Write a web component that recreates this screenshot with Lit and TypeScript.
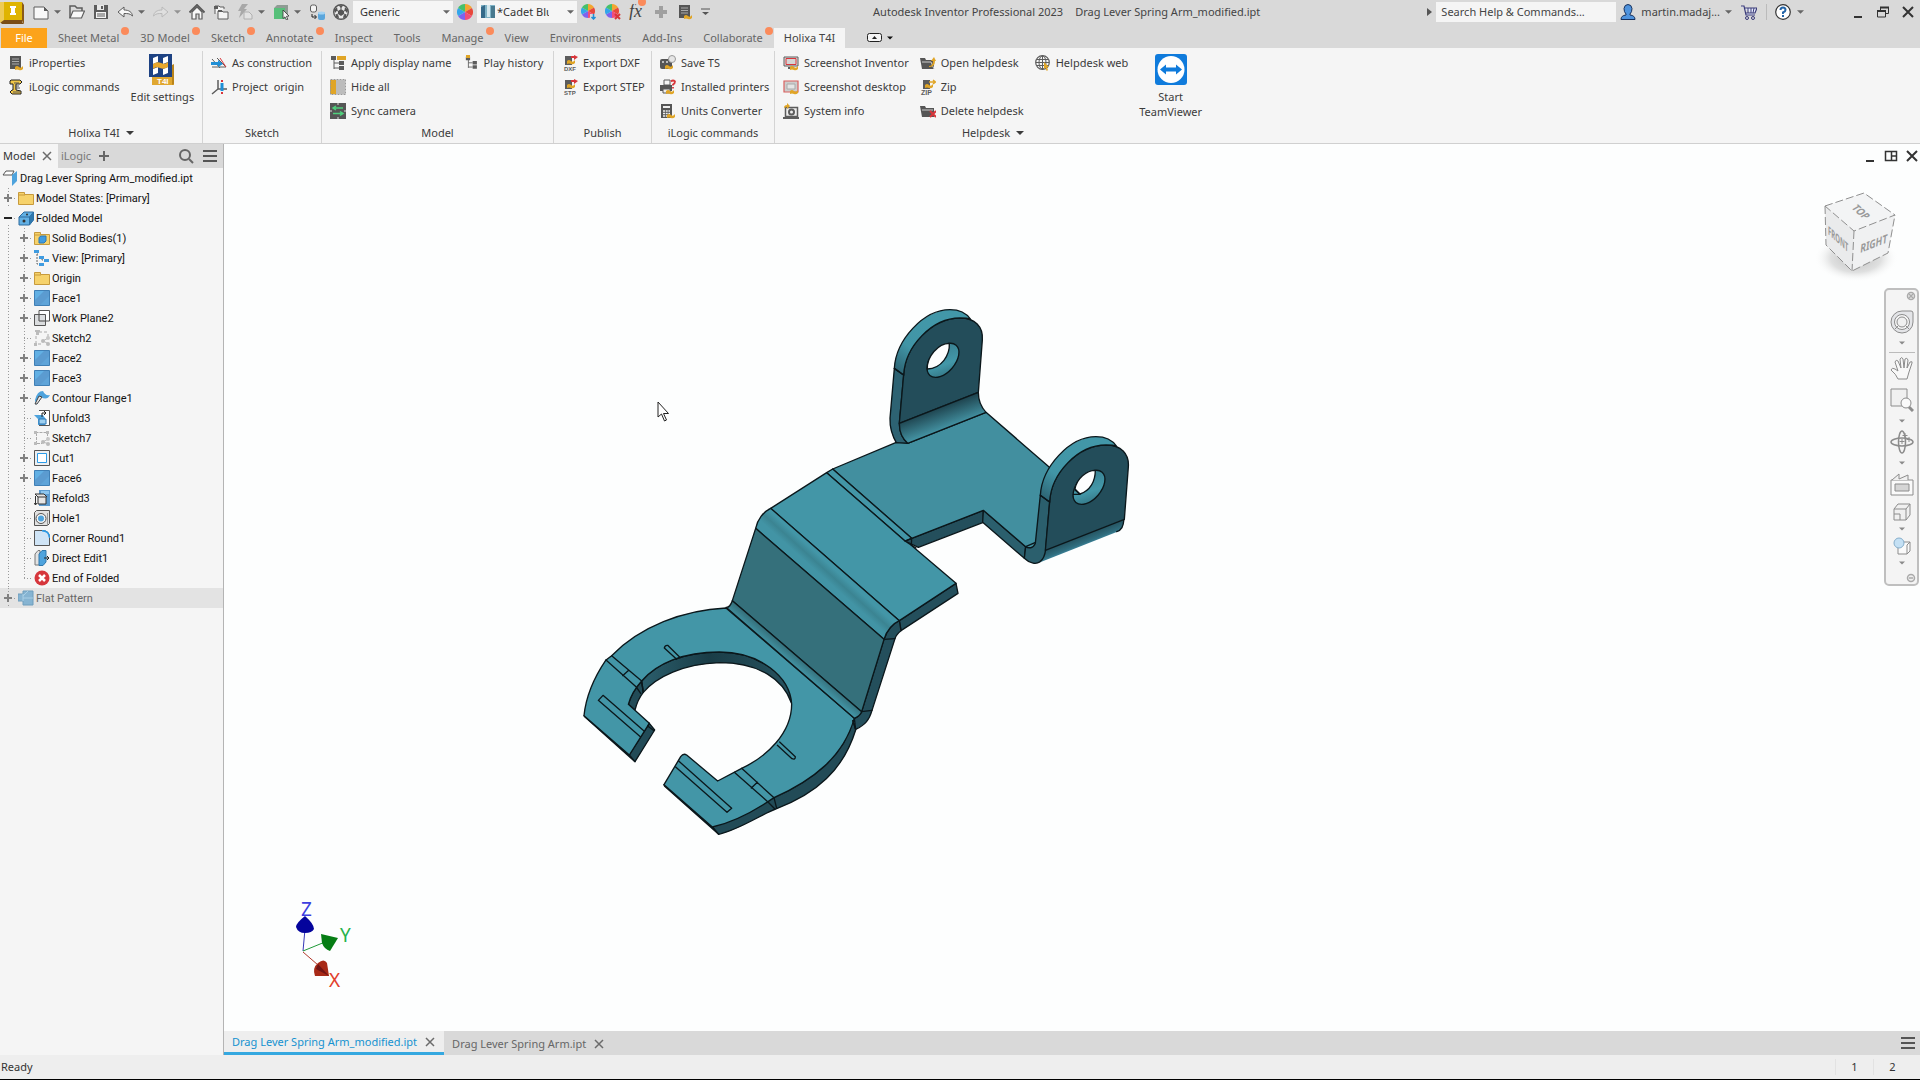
import { LitElement, html, css, svg, nothing } from "lit";
import type { TemplateResult, SVGTemplateResult } from "lit";
import { customElement, property } from "lit/decorators.js";
import { classMap } from "lit/directives/class-map.js";

const G = "#5c5c5c";
const Y = "#e0a526";
const R = "#d8353a";
const B = "#1f8fd6";
const wave = (x: number, y: number) =>
  svg`<path d="M${x} ${y + 4}v-3q2-2 4 0t4-1v3q-2 2-4 1t-4 0z" fill=${Y}/>`;
const wheelShape = (cx: number, cy: number, r: number) => {
  const colors = ["#f3a530", "#e8483b", "#f24d78", "#7d63ee", "#33a6ea", "#46c06a"];
  return colors.map((c, i) => {
    const a = ((i * 60 - 90) * Math.PI) / 180;
    const b = ((i * 60 - 30) * Math.PI) / 180;
    return svg`<path fill=${c} d="M${cx} ${cy}L${cx + r * Math.cos(a)} ${cy + r * Math.sin(a)}A${r} ${r} 0 0 1 ${cx + r * Math.cos(b)} ${cy + r * Math.sin(b)}Z"/>`;
  });
};
const face = svg`<path d="M.5.5h15v15H.5z" fill="#5b9bd0" stroke="#3f7fb5"/><path d="M1 1h9L1 10z" fill="#62b0e4"/><path d="M15 6v9H6z" fill="#62b0e4" opacity=".45"/>`;
const folder = svg`<path d="M.5 14.500V2.500h6v2h9v10z" fill="#f6d26b" stroke="#c79a3c"/><path d="M1 5h6" stroke="#c79a3c"/>`;
const tree = svg`<path d="M4 4v10M4 8h5M4 13h5" stroke=${G} fill="none"/><path d="M1 1h5v4H1zM9 6h5v4H9zM9 11h5v4H9z" fill=${G}/>`;
const exporter = (t: string) => svg`<path d="M3 1h7v9H3z" fill=${G}/><path d="M9 2h5" stroke=${R} stroke-width="2"/><path d="M12 0l4 2-4 3z" fill=${R}/>${wave(5, 5)}<text x="2" y="16" font-size="6" font-weight="700" fill=${G} font-family="Liberation Sans, sans-serif">${t}</text>`;

const ICONS: Record<string, SVGTemplateResult> = {
  newDoc: svg`<path d="M1 3h10l4 4v8H1z" fill="#f8f8f8" stroke=${G}/><path d="M11 3v4h4z" fill=${G}/>`,
  open: svg`<path d="M1 14V2h5l2 2h5v3" fill="none" stroke=${G} stroke-width="1.500"/><path d="M1 14l3-7h11.500l-3 7z" fill="#f8f8f8" stroke=${G} stroke-width="1.200"/>`,
  save: svg`<path d="M1 1h14v14H1z" fill=${G}/><path d="M4 1h7v5H4z" fill="#e8e8e8"/><path d="M8 2h2v3H8z" fill=${G}/><path d="M3 8h10v6H3z" fill="#f4f4f4"/><path d="M4 10h8M4 12h8" stroke=${G}/>`,
  undo: svg`<path d="M1 8l6-5v3c5 0 8 2 8.500 6C13 9.500 11 9.500 7 9.500V13z" fill="#f8f8f8" stroke=${G}/>`,
  redo: svg`<path d="M15 8L9 3v3C4 6 1 8 .5 12 3 9.500 5 9.500 9 9.500V13z" fill="#e4e4e4" stroke="#a5a5a5"/>`,
  home: svg`<path d="M3 8v7h4v-5h3v5h3V8L8 3z" fill="#f8f8f8" stroke=${G} stroke-width="1.200"/><path d="M.5 8.500L8 1l7.500 7.500" fill="none" stroke=${G} stroke-width="2"/>`,
  copies: svg`<path d="M2 10V2h4l1 1h4v2M5 7h4l1 1h5v7H5z" fill="#f4f4f4" stroke=${G}/><path d="M1 2h4v3H1zM5 6h4v2H5z" fill=${G}/>`,
  bolt: svg`<path d="M5 0h6L7 5h3L2 14l2-7H1z" fill="#a8a8a8"/><path d="M7 8h5l3 3v4H7z" fill="#e2e2e2" stroke="#b0b0b0"/>`,
  sheet: svg`<path d="M1 4h11v11H1z" fill="#57c07a"/><path d="M1 4l3-3h11v10l-3 3V4z" fill="#8f9c94"/><path d="M10 6l6 6-2.500.3 1.300 3-1.500.6-1.300-3L10 14.500z" fill="#f4f4f4" stroke="#333" stroke-width=".8"/>`,
  links: svg`<rect x="1.500" y="1" width="6" height="7" rx="2" fill="#f4f4f4" stroke=${G}/><path d="M3 10v3h4M5.500 11l2 2-2 2" fill="none" stroke="#222"/><rect x="9" y="8" width="7" height="8" rx="2" fill="#5aa6dc"/><ellipse cx="12.500" cy="9" rx="3.500" ry="1.500" fill="#a5d3f2"/>`,
  ball: svg`<circle cx="8" cy="8" r="7.300" fill="#e8e8e8" stroke="#555" stroke-width="1.400"/><path d="M8 5l3 2v3l-3 2-3-2V7z" fill="#555"/><path d="M5.500 1.200h5L8 4zM1 6l3-3 .500 3L2 9zM15 6l-3-3-.5 3L14 9zM3 13l-.5-3 3 1.500.5 3zM13 13l.5-3-3 1.500-.5 3z" fill="#555"/><path d="M8 5V3M5 7L3 6M11 7l2-1M5 10l-2 1M11 10l2 1" stroke="#555"/>`,
  colors: svg`${wheelShape(8, 8, 8)}`,
  colorDrop: svg`${wheelShape(7, 7, 7)}<path d="M9 10h7v6H9z" fill="#d9d9d9"/><path d="M12.500 10v4M10.500 13l2 2 2-2" stroke=${B} stroke-width="1.500" fill="none"/>`,
  colorClear: svg`${wheelShape(7, 7, 7)}<path d="M10 10l5 5M15 10l-5 5" stroke=${R} stroke-width="2"/>`,
  fx: svg`<text x="0" y="13" font-size="18" font-style="italic" fill="#444" font-family="Liberation Serif, serif">fx</text>`,
  plus: svg`<path d="M8 2v12M2 8h12" stroke="#a0a0a0" stroke-width="4"/>`,
  docWave: svg`<path d="M2 1h11v13H2z" fill="#555"/><path d="M4 4h7M4 6.500h7M4 9h7" stroke="#aaa"/>${wave(7, 11)}`,
  scroll: svg`<path d="M3 1h9l2 2-2 2H8v6l5 1v3H4l-2-2 2-2h1V5H2V2z" fill="#f3c848" stroke="#222"/><path d="M6 4h5M7 7h4M7 9h5M5 13h7" stroke="#555"/>`,
  asCon: svg`<path d="M1 4l8 9M1 12h14M6 3l9 9" stroke=${G} fill="none"/><path d="M9 3l6 9" stroke=${R} fill="none"/><path d="M0 7h7v-2l5 4-5 3v-2H0z" fill=${B}/>`,
  origin: svg`<path d="M7 1v9L1 15M7 10h9" stroke=${G} stroke-width="1.500" fill="none"/><path d="M11 4v8" stroke=${B} stroke-width="3"/><path d="M10 1h2v2h-2zM10 13h2v2h-2z" fill=${R}/>`,
  nameTree: svg`${tree}<path d="M7 1h9v4H7z" fill=${Y}/>`,
  history: svg`<g transform="translate(3 1) scale(.85)">${tree}</g><path d="M4 0h4v3H4z" fill=${Y}/>`,
  hideAll: svg`<path d="M0 1h6v14H0z" fill=${Y}/><path d="M6 1h9v14H6z" fill="#bcbcbc"/><path d="M.5.5h15v15H.5z" fill="none" stroke="#999" stroke-dasharray="2 1"/>`,
  sync: svg`<path d="M0 0h16v16H0z" fill="#555"/><path d="M3 5h10M6 3L3 5l3 2M3 10.500h10M10 8.500l3 2-3 2" stroke="#4fd07c" stroke-width="1.500" fill="none"/><path d="M0 8h2M14 8h2M8 0v2M8 14v2" stroke="#ddd"/>`,
  dxf: exporter("DXF"),
  stp: exporter("STP"),
  saveTs: svg`<rect x="0" y="4" width="12" height="10" rx="2" fill="#555"/><circle cx="12" cy="4" r="3.500" fill="#e5e5e5" stroke="#999"/><circle cx="3" cy="7" r="1" fill="#ddd"/><circle cx="7" cy="7" r="1" fill="#ddd"/>${wave(5, 10)}`,
  printer: svg`<path d="M4 1h6v5H4z" fill="#f5f5f5" stroke=${G}/><path d="M0 6h12v6H0z" fill="#555"/><path d="M3 10h7v4H3z" fill="#eee" stroke=${G}/><path d="M11 2.500q2-2 4 0 0 2-2 3v1M13 8v1.500" stroke=${R} stroke-width="1.800" fill="none"/>${wave(6, 11)}`,
  calc: svg`<path d="M1 1h11v14H1z" fill="#555"/><path d="M3 3h7v2H3z" fill="#eee"/><path d="M3 8h7M3 10.500h7M3 13h5" stroke="#eee" stroke-width="1.500" stroke-dasharray="2 .7"/>${wave(7, 11)}`,
  shotInv: svg`<path d="M1 2h14v9H1z" fill="#ddd" stroke=${G}/><path d="M3 3.500h10v6H3z" fill="#d5d5d5" stroke=${R}/><path d="M5 13h6" stroke=${G} stroke-width="2"/>${wave(7, 11)}`,
  shotDesk: svg`<path d="M1 2h14v11H1z" fill="#ccc" stroke="#d9605f" stroke-width="1.200"/><path d="M4 5h8v5H4z" fill="#e5e5e5" stroke="#aaa"/>${wave(7, 11)}`,
  sysInfo: svg`<path d="M2.500 4.500h12v9h-12z" fill="#eee" stroke=${G} stroke-width="1.500"/><path d="M0 15h16" stroke=${G} stroke-width="2"/><circle cx="8.500" cy="9" r="2.500" fill="none" stroke=${G} stroke-width="2"/><path d="M1 5q0-3 3-3V0l3 3-3 3V4z" fill=${Y}/>`,
  openHelp: svg`<path d="M0 3h5l1 2h8v9H2z" fill="#555"/><path d="M2 7h9l3 7" stroke="#ccc" fill="none"/><path d="M9 11q4 0 4-5h-2l3-4 2 4h-1q0 6-6 6z" fill=${Y}/>`,
  zip: svg`<path d="M3 1h7v9H3z" fill=${G}/><path d="M9 3h6M13 1l2.500 2L13 5" stroke=${Y} stroke-width="1.500" fill="none"/>${wave(5, 5)}<text x="1" y="16" font-size="7" font-weight="700" fill=${G} font-family="Liberation Sans, sans-serif">ZIP</text>`,
  delHelp: svg`<path d="M0 3h5l1 2h8v9H2z" fill="#555"/><path d="M2 7h11" stroke="#ccc" fill="none"/><path d="M10 8l6 6M16 8l-6 6" stroke=${R} stroke-width="2"/>`,
  globe: svg`<circle cx="7.500" cy="7.500" r="6.800" fill="#f5f5f5" stroke=${G} stroke-width="1.200"/><path d="M7.500 1v13M1 7.500h13M2 4.500h11M2 10.500h11" stroke=${G} fill="none"/><ellipse cx="7.500" cy="7.500" rx="3.500" ry="6.500" fill="none" stroke=${G}/><path d="M9 7l5 5-2 .3 1 3-1.500.5-1-3L9 14z" fill=${Y}/>`,
  user: svg`<path d="M1 15.500q0-4 5-4.500v-1Q4 8 4 4.500 4.500.5 8 .5t4 4Q12 8 10 10v1q5 .5 5 4.500z" fill="#4f93dd" stroke="#16305c"/>`,
  cart: svg`<path d="M0 2h3l2 9h9M4 4h12l-2 5H5" fill="#e6ecff" stroke="#3a3a78" stroke-width="1.200"/><path d="M7 4v5M10 4v5M13 4l-1 5" stroke="#3a3a78"/><circle cx="6" cy="14" r="1.500" fill="none" stroke="#3a3a78"/><circle cx="12" cy="14" r="1.500" fill="none" stroke="#3a3a78"/>`,
  help: svg`<circle cx="8" cy="8" r="7.300" fill="#fff" stroke="#333" stroke-width="1.200"/><path d="M5.500 6Q5.500 3.500 8 3.500T10.500 6Q10.500 7.500 8 8.500V10M8 11v2" stroke="#2465a8" stroke-width="2" fill="none"/>`,
  minimize: svg`<path d="M4 13h8" stroke="#333" stroke-width="2"/>`,
  restore: svg`<path d="M2.500 7h8v6h-8zM5.500 7V3.500h8v6h-3" fill="none" stroke="#333"/><path d="M2 7h9M5 3.500h9" stroke="#333" stroke-width="2"/>`,
  close: svg`<path d="M3 3l10 10M13 3L3 13" stroke="#333" stroke-width="2"/>`,
  tile: svg`<path d="M2.500 3.500h11v9h-11zM8.500 3.500v9M8.500 8h5" fill="none" stroke="#333" stroke-width="1.500"/>`,
  smallX: svg`<path d="M4 4l8 8M12 4l-8 8" stroke="#6b6b6b" stroke-width="1.500"/>`,
  add: svg`<path d="M8 3v10M3 8h10" stroke="#666" stroke-width="2"/>`,
  search: svg`<circle cx="7" cy="7" r="5" fill="none" stroke="#666" stroke-width="2"/><path d="M11 11l4 4" stroke="#666" stroke-width="2"/>`,
  menu: svg`<path d="M1 3h14M1 8h14M1 13h14" stroke="#555" stroke-width="2"/>`,
  part: svg`<path d="M1 5l3-4h8l-2 4z" fill="#fff" stroke="#555"/><path d="M10 5l5-4v10l-5 5z" fill="#4ea3dd"/>`,
  folder,
  folded: svg`<path d="M1 7l5-5h9.500v8l-4 5H1z" fill="#62b0e4" stroke="#2c6a9e"/><path d="M1 7h10.500l4-5M11.500 7v8" stroke="#2c6a9e" fill="none"/><path d="M11.500 7l4-5v8l-4 5z" fill="#2f78ad"/><circle cx="6" cy="11" r="1.500" fill="#333"/><circle cx="9" cy="4.500" r="1" fill="#333"/>`,
  bodies: svg`${folder}<path d="M5 7.500L7 6h5v5l-2 2H5z" fill="#3f9be0" stroke="#2c76b4"/>`,
  view: svg`<path d="M3 4v10h2M3 4h1M8 9v1h3" fill="none" stroke="#666" stroke-dasharray="2 1"/><path d="M0 0h5v3H0zM5 6h5v3H5zM10 9h5v3h-5zM5 13h5v3H5z" fill="#3f9be0"/>`,
  face,
  plane: svg`<path d="M5 .5h10.500V11H5z" fill="#fff" stroke="#555"/><path d="M.5 4.500h11v11H.5z" fill="#d5d7da" fill-opacity=".8" stroke="#555"/><path d="M5 4.500V11h6.500" stroke="#555" fill="none"/>`,
  sketchA: svg`<path d="M5 2h9M2 6v8h6M14 4v3" stroke="#aaa" fill="none" stroke-dasharray="3 2"/><path d="M1 0h5v2H1zM2 2h3v3H2zM0 13h3v3H0z" fill="#bbb"/><path d="M14 8l-5 3 6 3" stroke="#bbb" fill="none"/><circle cx="14" cy="8" r="2" fill="#c8c8c8"/><circle cx="9" cy="11" r="2" fill="#bbb"/><circle cx="14" cy="14" r="2" fill="#bbb"/>`,
  sketchB: svg`<path d="M1.500 2.500h12M2.500 3v11M13.500 3v5M3 13.500h5" stroke="#aaa" fill="none" stroke-dasharray="3 1"/><path d="M0 1h3v3H0zM12 1h3v3h-3zM0 12h3v3H0z" fill="#bbb"/><path d="M14 9l-5 3 6 2" stroke="#bbb" fill="none"/><circle cx="14" cy="9" r="2" fill="#c8c8c8"/><circle cx="9" cy="12" r="2" fill="#bbb"/><circle cx="14" cy="14" r="2" fill="#bbb"/>`,
  flange: svg`<path d="M1 10Q3 1 9 1q2 5 7 4-3 6-9 2l-5 8z" fill="#4ea3dd"/><path d="M1 14L5 6l3 1-5 7z" fill="#e8e8e8" stroke="#444"/>`,
  unfold: svg`<path d="M5 .5h10.500v15H5" fill="#fff" stroke="#555"/><path d="M0 5h9l2 3v7H4V9z" fill="#4ea3dd"/><path d="M5 9h7v5H5z" fill="#9fd0f0" stroke="#2c76b4"/><path d="M8 7V3h3M10 1l2 2-2 2" stroke="#222" fill="none"/>`,
  cut: svg`<path d="M.5.5h15v15H.5z" fill="#eceef0" stroke="#555"/><path d="M3.500 3.500h9v9h-9z" fill="#fff" stroke="#2b9be8"/>`,
  refold: svg`<path d="M5 0h11v16H5z" fill="#5b9bd0"/><path d="M7 1h8v3H7z" fill="#8ec6ee"/><path d="M4 7h8v7H4zM4 7L1 4h9l3 3" fill="#e6e6e6" stroke="#333"/><path d="M1.500 6v9M0 13l1.500 2L3 13" stroke="#333" fill="none"/>`,
  hole: svg`<path d="M.5 2.500l2-2h13v13l-2 2H.5z" fill="#e2e2e2" stroke="#555"/><circle cx="7" cy="8.500" r="5" fill="#f4f4f4" stroke="#555"/><circle cx="7" cy="8.500" r="3" fill="#4ea3dd"/><path d="M13.500 15.500V3" stroke="#999"/>`,
  round: svg`<path d="M.5.500h8q7 0 7 7v8H.5z" fill="#cfe4f6" stroke="#555"/><path d="M8 .8q7 0 7.500 7" fill="none" stroke="#2b9be8" stroke-width="1.500"/>`,
  direct: svg`<path d="M1 15V4l3-3.500h2V15z" fill="#e2e2e2" stroke="#777"/><path d="M5 4l3-3.500h4V12l-3 3.500H5z" fill="#4ea3dd" stroke="#2f78ad"/><path d="M10 8h5M13 6l2 2-2 2" stroke="#222" fill="none"/>`,
  end: svg`<circle cx="8" cy="8" r="7.500" fill="#d6363c"/><path d="M5 5l6 6M11 5l-6 6" stroke="#fff" stroke-width="2.500"/>`,
  flat: svg`<path d="M0 4h5V1h10v14H5v-4H0z" fill="#86b4d2" stroke="#6f9ebd"/><path d="M5 4v7M5 8h10M10 1L5 6" stroke="#a9cfe6" fill="none"/>`,
};

const icon = (name: string, size = "16") =>
  html`<svg class="ic" width=${size} height=${size} viewBox="0 0 16 16" aria-hidden="true">${ICONS[name]}</svg>`;
const caret = html`<svg class="caret" width="8" height="8" viewBox="0 0 8 8" aria-hidden="true"><path d="M0 2h8L4 6z" fill="currentColor"/></svg>`;

const reset = css`
  * { box-sizing: border-box; }
  button, input, select {
    font: inherit; color: inherit; background: none; border: 0; padding: 0; margin: 0; border-radius: 0;
  }
  svg { display: block; flex: none; }
  ul { list-style: none; margin: 0; padding: 0; }
`;

interface Tool { icon: string; label: string; }
interface Panel { title: string; more?: boolean; columns: Tool[][]; big?: "settings" | "teamviewer"; }

@customElement("title-bar")
class TitleBar extends LitElement {
  static styles = [reset, css`
    :host { display: flex; height: 28px; padding-bottom: 5px; align-items: center; background: #d9d9d9; color: #444; }
    .logo { width: 24px; margin-right: 9px; }
    .quick { display: flex; align-items: center; gap: 8px; }
    .split { display: flex; align-items: center; gap: 5px; }
    .caret { width: 7px; color: #666; }
    .faded { opacity: .6; }
    .pick { position: relative; width: 100px; margin: 0 -4px; }
    .pick select { appearance: none; width: 100%; height: 22px; padding: 0 18px 0 7px; background: #f5f5f5; color: #333; overflow: hidden; }
    .pick.swatch select { padding: 0 28px 0 20px; text-overflow: clip; }
    .pick .caret { position: absolute; right: 3px; top: 7px; }
    .pick .chip { position: absolute; left: 4px; top: 3px; }
    .badge { position: relative; }
    .badge::after { content: ""; position: absolute; right: -1px; top: -6px; width: 8px; height: 8px; border-radius: 4px; background: #fb8b5b; }
    .title { flex: 1; display: flex; justify-content: center; gap: 12px; padding-right: 4px; white-space: nowrap; }
    .right { display: flex; align-items: center; }
    .right input { width: 180px; height: 20px; padding: 0 5px; margin: 0 4px; background: #f5f5f5; outline: 0; }
    .right input::placeholder { color: #444; opacity: 1; }
    .user { display: flex; align-items: center; gap: 5px; }
    .cart { margin: 0 9px; }
    .help { display: flex; align-items: center; gap: 6px; border-left: 1px solid #bbb; padding-left: 8px; }
    .win { display: flex; gap: 9px; margin: 0 4px 0 46px; }
  `];
  render() {
    const b = (n: string, label: string, cls = "") => html`<button class=${cls} aria-label=${label}>${icon(n)}</button>`;
    const s = (n: string, label: string, cls = "") => html`<button class="split ${cls}" aria-label=${label}>${icon(n)}${caret}</button>`;
    return html`
      <svg class="logo" width="24" height="24" viewBox="0 0 24 24" aria-hidden="true">
        <path d="M0 4l2-2h20v20l2 2H2l-2-2z" fill="#7a4d17"/><path d="M0 2h22v18H0z" fill="#dfb400"/><path d="M0 2h4v18l-4 3z" fill="#eecb55"/><path d="M22 2l2 3v19l-2-3z" fill="#8a5a18"/><path d="M10 6h6v2h-1v5h1v2h-6v-2h1V8h-1z" fill="#fff"/>
      </svg>
      <div class="quick">
        ${s("newDoc", "New")}${b("open", "Open")}${b("save", "Save")}${s("undo", "Undo")}${s("redo", "Redo", "faded")}
        ${b("home", "Home")}${b("copies", "Projects")}${s("bolt", "Update")}${s("sheet", "Select")}${b("links", "Link")}${b("ball", "Material browser")}
        <div class="pick"><select aria-label="Material"><option>Generic</option></select>${caret}</div>
        ${b("colors", "Appearance browser")}
        <div class="pick swatch"><select aria-label="Appearance"><option>*Cadet Blue</option></select>
          <svg class="chip" width="14" height="16" viewBox="0 0 14 16" aria-hidden="true"><path d="M0 1h14v13H0z" fill="#7fb3c6"/><path d="M0 3l4-2v13H0z" fill="#356a8a"/><path d="M6 1h3v12H6z" fill="#d5e8ee"/><path d="M10 2h4v12h-4z" fill="#47798f"/></svg>
          ${caret}</div>
        ${b("colorDrop", "Adjust appearance")}${b("colorClear", "Clear appearance")}${b("fx", "Parameters", "badge")}${b("plus", "Add")}${b("docWave", "iProperties")}
        <button aria-label="Customize"><svg width="9" height="16" viewBox="0 0 9 16"><path d="M0 5h9" stroke="#555"/><path d="M1 8h7L4.500 11z" fill="#555"/></svg></button>
      </div>
      <div class="title"><span>Autodesk Inventor Professional 2023</span><span>Drag Lever Spring Arm_modified.ipt</span></div>
      <div class="right">
        <svg width="5" height="8" viewBox="0 0 5 8" aria-hidden="true"><path d="M0 0v8l5-4z" fill="#555"/></svg>
        <input aria-label="Search" placeholder="Search Help &amp; Commands..." />
        <button class="user">${icon("user")}<span>martin.madaj...</span>${caret}</button>
        ${b("cart", "App store", "cart")}
        <button class="help" aria-label="Help">${icon("help")}${caret}</button>
        <div class="win">${b("minimize", "Minimize")}${b("restore", "Restore")}${b("close", "Close")}</div>
      </div>`;
  }
}

@customElement("ribbon-bar")
class RibbonBar extends LitElement {
  static styles = [reset, css`
    :host { display: block; background: #d9d9d9; color: #3b3b3b; }
    .tabs { display: flex; gap: 1px; height: 20px; align-items: stretch; padding-left: 1px; }
    .tab { position: relative; padding: 0 10px; color: #666; white-space: nowrap; }
    .file { width: 46px; background: #fca31b; color: #fff; }
    .on { background: #f5f5f5; color: #444; }
    .new::after { content: ""; position: absolute; right: 0; top: -1px; width: 8px; height: 8px; border-radius: 4px; background: #fb8b5b; }
    .mode { display: flex; align-items: center; gap: 4px; margin-left: 21px; color: #111; }
    .mode .caret { width: 6px; }
    .body { display: grid; grid-template-columns: 203px 119px 232px 98px 123px 436px 1fr; background: #f5f5f5; border-bottom: 1px solid #d0d0d0; padding-top: 3px; height: 96px; }
    .panel { display: flex; flex-direction: column; border-right: 1px solid #d4d4d4; padding-left: 8px; }
    .panel:last-of-type { border-right: 0; }
    .tools { display: flex; gap: 11px; height: 72px; }
    .col { display: flex; flex-direction: column; }
    .tool { display: flex; align-items: center; gap: 5px; height: 24px; white-space: pre; }
    .big { display: flex; flex-direction: column; align-items: center; gap: 3px; padding-top: 3px; line-height: 15px; }
    .name { height: 20px; line-height: 18px; display: flex; align-items: center; justify-content: center; gap: 6px; padding-right: 8px; }
  `];
  private tabs: [string, boolean][] = [["Sheet Metal", true], ["3D Model", true], ["Sketch", true], ["Annotate", true], ["Inspect", false], ["Tools", false], ["Manage", true], ["View", false], ["Environments", false], ["Add-Ins", false], ["Collaborate", true]];
  private panels: Panel[] = [
    { title: "Holixa T4I", more: true, big: "settings", columns: [[{ icon: "docWave", label: "iProperties" }, { icon: "scroll", label: "iLogic commands" }]] },
    { title: "Sketch", columns: [[{ icon: "asCon", label: "As construction" }, { icon: "origin", label: "Project  origin" }]] },
    { title: "Model", columns: [[{ icon: "nameTree", label: "Apply display name" }, { icon: "hideAll", label: "Hide all" }, { icon: "sync", label: "Sync camera" }], [{ icon: "history", label: "Play history" }]] },
    { title: "Publish", columns: [[{ icon: "dxf", label: "Export DXF" }, { icon: "stp", label: "Export STEP" }]] },
    { title: "iLogic commands", columns: [[{ icon: "saveTs", label: "Save TS" }, { icon: "printer", label: "Installed printers" }, { icon: "calc", label: "Units Converter" }]] },
    { title: "Helpdesk", more: true, big: "teamviewer", columns: [
      [{ icon: "shotInv", label: "Screenshot Inventor" }, { icon: "shotDesk", label: "Screenshot desktop" }, { icon: "sysInfo", label: "System info" }],
      [{ icon: "openHelp", label: "Open helpdesk" }, { icon: "zip", label: "Zip" }, { icon: "delHelp", label: "Delete helpdesk" }],
      [{ icon: "globe", label: "Helpdesk web" }]] },
  ];
  private big(kind?: string) {
    if (kind === "settings") return html`<button class="big"><svg width="32" height="32" viewBox="0 0 32 32" aria-hidden="true">
      <path d="M9 11h19v20H6V20z" fill="#e0a730"/><path d="M26 11l2-1v20l-2 1z" fill="#b9841b"/><path d="M3 0h23v23H3z" fill="#1d4283"/>
      <path d="M7 4l5-2v6l-5 2zM17 4l5-2v6l-5 2zM7 15l5-2v6l-5 2zM17 15l5-2v6l-5 2z" fill="#fff"/><path d="M7 10q4-3 8-1t7-1v5q-4 3-8 1t-7 1z" fill="#e9a82c"/>
      <text x="11" y="30" font-size="8" font-weight="700" fill="#fff" font-family="Liberation Sans, sans-serif">T4I</text></svg><span>Edit settings</span></button>`;
    if (kind === "teamviewer") return html`<button class="big"><svg width="32" height="32" viewBox="0 0 32 32" aria-hidden="true">
      <rect x="0" y="0" width="32" height="31" rx="3" fill="#0f7bdc"/><circle cx="16" cy="15.500" r="13.500" fill="#fff"/>
      <path d="M5 15.500l6-5v3h10v-3l6 5-6 5v-3H11v3z" fill="#0f7bdc"/></svg><span>Start<br />TeamViewer</span></button>`;
    return nothing;
  }
  render() {
    return html`
      <nav class="tabs">
        <button class="tab file">File</button>
        ${this.tabs.map(([t, n]) => html`<button class=${classMap({ tab: true, new: n })}>${t}</button>`)}
        <button class="tab on">Holixa T4I</button>
        <button class="mode" aria-label="Ribbon display"><svg width="16" height="10" viewBox="0 0 16 10"><rect x=".5" y=".5" width="14" height="8" rx="2" fill="#f5f5f5" stroke="#222"/><path d="M5 6h5L7.500 3z" fill="#222"/></svg>${caret}</button>
      </nav>
      <div class="body">
        ${this.panels.map((p) => html`<section class="panel">
          <div class="tools">
            ${p.columns.map((c) => html`<div class="col">${c.map((t) => html`<button class="tool">${icon(t.icon)}<span>${t.label}</span></button>`)}</div>`)}
            ${this.big(p.big)}
          </div>
          <div class="name">${p.title}${p.more ? caret : nothing}</div>
        </section>`)}
      </div>`;
  }
}

interface Node { icon: string; label: string; cells: string; dim?: boolean; }

@customElement("model-browser")
class ModelBrowser extends LitElement {
  static styles = [reset, css`
    :host { display: flex; flex-direction: column; background: #f5f5f5; border-right: 1px solid #b4b4b4; color: #111; }
    .tabs { display: flex; align-items: center; height: 24px; background: #d9d9d9; color: #777; padding-right: 5px; }
    .tab { display: flex; align-items: center; gap: 4px; height: 24px; padding: 0 3px; }
    .on { background: #f5f5f5; color: #333; width: 58px; }
    .add { margin-left: 2px; }
    .grow { flex: 1; }
    .menu { margin-left: 8px; }
    .tree { font: 11px/20px Roboto, "Noto Sans", sans-serif; }
    .row { display: flex; align-items: center; height: 20px; white-space: nowrap; }
    .row .ic { margin: 0 2px; }
    .row button { display: block; }
    .row span { padding-top: 2px; }
    .dim { background: #e3e3e3; color: #666; }
  `];
  private nodes: Node[] = [
    { icon: "part", label: "Drag Lever Spring Arm_modified.ipt", cells: "" },
    { icon: "folder", label: "Model States: [Primary]", cells: "+" },
    { icon: "folded", label: "Folded Model", cells: "-" },
    { icon: "bodies", label: "Solid Bodies(1)", cells: "|+" },
    { icon: "view", label: "View: [Primary]", cells: "|+" },
    { icon: "folder", label: "Origin", cells: "|+" },
    { icon: "face", label: "Face1", cells: "|+" },
    { icon: "plane", label: "Work Plane2", cells: "|+" },
    { icon: "sketchA", label: "Sketch2", cells: "|t" },
    { icon: "face", label: "Face2", cells: "|+" },
    { icon: "face", label: "Face3", cells: "|+" },
    { icon: "flange", label: "Contour Flange1", cells: "|+" },
    { icon: "unfold", label: "Unfold3", cells: "|t" },
    { icon: "sketchB", label: "Sketch7", cells: "|t" },
    { icon: "cut", label: "Cut1", cells: "|+" },
    { icon: "face", label: "Face6", cells: "|+" },
    { icon: "refold", label: "Refold3", cells: "|t" },
    { icon: "hole", label: "Hole1", cells: "|t" },
    { icon: "round", label: "Corner Round1", cells: "|t" },
    { icon: "direct", label: "Direct Edit1", cells: "|t" },
    { icon: "end", label: "End of Folded", cells: "|l" },
    { icon: "flat", label: "Flat Pattern", cells: "+", dim: true },
  ];
  private cell(k: string): TemplateResult {
    const line = (d: string) => svg`<path d=${d} stroke="#9a9a9a" stroke-dasharray="1 2" fill="none"/>`;
    const shapes: Record<string, SVGTemplateResult> = {
      "|": line("M8.500 0v20"),
      t: svg`${line("M8.500 0v20")}${line("M8 10.500h9")}`,
      l: svg`${line("M8.500 0v11")}${line("M8 10.500h9")}`,
      "+": svg`${line("M8.500 0v4M8.500 17v3")}${line("M14 10.500h3")}<path d="M4 10h8M8 6v8" stroke="#808080" stroke-width="2"/>`,
      "-": svg`${line("M8.500 17v3")}${line("M14 10.500h3")}<path d="M4 10h8" stroke="#222" stroke-width="2"/>`,
    };
    const g = html`<svg width="16" height="20" viewBox="0 0 16 20" aria-hidden="true">${shapes[k]}</svg>`;
    return k === "+" || k === "-" ? html`<button aria-label=${k === "+" ? "Expand" : "Collapse"}>${g}</button>` : g;
  }
  render() {
    return html`
      <div class="tabs">
        <button class="tab on">Model${icon("smallX")}</button><button class="tab">iLogic</button>
        <button class="add" aria-label="Add panel">${icon("add")}</button><span class="grow"></span>
        <button aria-label="Search">${icon("search")}</button><button class="menu" aria-label="Menu">${icon("menu")}</button>
      </div>
      <ul class="tree">
        ${this.nodes.map((n) => html`<li class=${classMap({ row: true, dim: !!n.dim })}>${[...n.cells].map((k) => this.cell(k))}${icon(n.icon)}<span>${n.label}</span></li>`)}
      </ul>`;
  }
}

@customElement("nav-bar")
class NavBar extends LitElement {
  static styles = [reset, css`
    :host { display: flex; flex-direction: column; align-items: center; width: 35px; background: #f4f4f4; border: 2px solid #bfbfbf; border-radius: 5px; color: #8a8a8a; }
    .end { align-self: flex-end; }
    .tall { margin-top: 8px; }
    .drop { height: 18px; display: flex; align-items: center; }
    .short { height: 10px; }
    .drop svg { width: 6px; }
    .rule { width: 26px; height: 1px; background: #bbb; margin-bottom: 3px; }
    .gap { margin-top: 8px; }
    .step { margin-top: 4px; }
    button { display: block; }
  `];
  render() {
    const v = (body: SVGTemplateResult, label: string, cls = "") => html`<button class=${cls} aria-label=${label}><svg width="24" height="24" viewBox="0 0 24 24" fill="#f0f0f0" stroke="#8c8c8c">${body}</svg></button>`;
    const dot = (d: string, label: string, cls: string) => html`<button class="end ${cls}" aria-label=${label}><svg width="12" height="12" viewBox="0 0 12 12"><circle cx="6" cy="6" r="3.500" fill="#eee" stroke="#aaa" stroke-width="1.500"/><path d=${d} stroke="#aaa" stroke-width="1.500"/></svg></button>`;
    const drop = (cls = "") => html`<button class="drop ${cls}" aria-label="More">${caret}</button>`;
    return html`
      ${dot("M4 4l4 4M8 4L4 8", "Close", "")}
      ${v(svg`<path d="M12 1h9q2 0 2 2v9A11 11 0 1 1 12 1z" fill="#e4e5e8"/><circle cx="12" cy="12" r="7.500" fill="#f6f6f6"/><circle cx="12" cy="12" r="5"/><path d="M5 19l3-3M19 19l-3-3"/>`, "Navigation wheel", "tall")}
      ${drop()}<span class="rule"></span>
      ${v(svg`<path d="M8 23q-2-5-7-9 1-3 4-1l3 2-3-9q1-3 3-1l3 7-1-9q2-3 3 0l1 9 1-9q2-2 3 1l-1 8 3-6q3-1 2 1l-3 9-2 7z" fill="#f8f8f8"/>`, "Pan")}
      ${v(svg`<path d="M1 1h16v17H1z"/><circle cx="16" cy="15" r="5" fill="#fafafa"/><path d="M19 19l4 4" stroke-width="3"/>`, "Zoom", "gap")}
      ${drop()}
      ${v(svg`<ellipse cx="12" cy="12" rx="11" ry="4" fill="none" stroke-width="1.500"/><ellipse cx="12" cy="12" rx="3.500" ry="11" fill="none" stroke-width="1.500"/><path d="M12 9v5M9.500 11.500h5M15 3v5M12.500 5.500h5M19 7v5M16.500 9.500h5"/>`, "Orbit")}
      ${drop()}
      ${v(svg`<path d="M1 8h22v15H1z" fill="#fafafa"/><path d="M5 12h14v7H5z" fill="#d5d5d5"/><path d="M2 8l7-6v5l9-4v5"/>`, "Look at")}
      ${v(svg`<path d="M4 9l4-5h12v11l-4 5H4z"/><path d="M4 9h12l4-5M16 9v11M4 14h6v6" fill="none"/>`, "View face", "step")}
      ${drop("short")}
      ${v(svg`<path d="M8 11l3-3h9v9l-3 3H8z" fill="#fafafa"/><path d="M17 20v-9l3-3" fill="none"/><circle cx="9" cy="9" r="5" fill="#c4e0f4" stroke="#86aecb"/>`, "Visual style")}
      ${drop("short")}
      ${dot("M4 6h4", "Options", "step")}`;
  }
}

@customElement("model-scene")
class ModelScene extends LitElement {
  static styles = [reset, css`
    :host { display: block; }
    .scene { width: 100%; height: 100%; }
    .edge { stroke: #0b171b; stroke-width: 4; stroke-linejoin: round; stroke-linecap: round; }
    .line { fill: none; }
    .axis { font: 19px "Noto Sans", sans-serif; }
    .cube { font: 700 12px "Noto Sans", sans-serif; fill: #9a9a9a; }
  `];
  private lug(dx: number, dy: number) {
    return svg`<g transform="translate(${dx} ${dy})">
      <path d="M118 400L131 255C135 170 215 84 300 84C345 84 370 110 367 150L355 307z" fill="#234d5a"/>
      <path d="M103 235C108 150 190 59 270 59C300 59 318 68 332 88C322 84 310 84 300 84C215 84 135 170 131 255z" fill="url(#rim)"/>
      <ellipse cx="249" cy="211" rx="60" ry="36" transform="rotate(-49 249 211)" fill="url(#bore)"/>
      <path class="line" d="M131 255l-28-20"/>
    </g>`;
  }
  render() {
    return html`<svg class="scene" viewBox="224 144 1696 887" role="img" aria-label="Sheet metal part">
      <defs>
        <linearGradient id="rim" gradientUnits="userSpaceOnUse" x1="105" y1="240" x2="200" y2="110"><stop offset="0" stop-color="#2d6473"/><stop offset=".5" stop-color="#4195a6"/><stop offset="1" stop-color="#4297a8"/></linearGradient>
        <linearGradient id="bore" x1="0" y1="1" x2="1" y2="0"><stop offset="0" stop-color="#2f6b7a"/><stop offset=".4" stop-color="#4398a9"/><stop offset="1" stop-color="#36798a"/></linearGradient>
        <linearGradient id="fold1" gradientUnits="userSpaceOnUse" x1="236" y1="352" x2="258" y2="412"><stop offset="0" stop-color="#1e434e"/><stop offset="1" stop-color="#428f9f"/></linearGradient>
        <linearGradient id="fold2" gradientUnits="userSpaceOnUse" x1="674" y1="732" x2="688" y2="768"><stop offset="0" stop-color="#24515e"/><stop offset=".6" stop-color="#2f6d7e"/><stop offset="1" stop-color="#4795b0"/></linearGradient>
        <linearGradient id="bendTop" gradientUnits="userSpaceOnUse" x1="400" y1="385" x2="355" y2="435"><stop offset="0" stop-color="#4396a7"/><stop offset=".3" stop-color="#3b8492"/><stop offset=".6" stop-color="#4294a5"/><stop offset="1" stop-color="#4294a5"/></linearGradient>
        <linearGradient id="bendLow" gradientUnits="userSpaceOnUse" x1="291" y1="648" x2="271" y2="672"><stop offset="0" stop-color="#35707b"/><stop offset="1" stop-color="#4396a7"/></linearGradient>
        <linearGradient id="ring" x1="0" y1="0" x2="1" y2="0"><stop offset="0" stop-color="#2b5e6c"/><stop offset=".45" stop-color="#1a3d47"/><stop offset="1" stop-color="#27525f"/></linearGradient>
        <radialGradient id="shade"><stop offset="0" stop-color="#888" stop-opacity=".55"/><stop offset=".6" stop-color="#999" stop-opacity=".3"/><stop offset="1" stop-color="#fff" stop-opacity="0"/></radialGradient>
      </defs>

      <g class="edge" transform="translate(560 580) scale(.33333)">
        <path fill="#224b57" d="M642 653C760 600 850 530 880 420L887 450C850 570 770 640 650 686C600 705 540 748 476 763L457 741z"/>
        <path fill="#224b57" d="M72 407l136 118 17 20L75 411z"/>
        <path fill="#224b57" d="M312 614l145 127 19 22L314 619z"/>
        <path fill="#224b57" d="M208 525l60-95 16 20-59 95z"/>
        <path fill="#224b57" d="M205 373C212 348 225 325 245 303L250 337C238 352 230 370 225 390z"/>
        <path fill="url(#ring)" d="M245 303C290 250 370 216 478 216C600 216 690 290 694 368C670 300 600 248 478 248C370 252 290 290 250 337z"/>
        <path fill="#4396a7" fill-rule="evenodd" d="M498 84C370 90 240 140 155 227L138 240C104 290 78 350 72 407L208 525L268 430L205 373C212 348 225 325 245 303C290 250 370 216 478 216C600 216 690 290 695 372C695 460 620 530 545 565L473 603L380 525Q370 519 362 530L312 614L457 741C520 727 585 692 642 653C760 600 850 530 883 415z"/>
        <path class="line" d="M155 227l90 76M138 240l90 80 14 20M245 303l5 34M188 287l18-16M241 470L115 361l14-15 124 108M268 430l-5 8 19 14M350 238l-37-34q2-9 10-8l38 37M652 496l44 40q10 4 10-6l-47-44M545 565l97 88 8 32M523 577l101 89 20 20M574 624l18-17M356 543l159 142-14 12-154-136"/>
      </g>

      <g class="edge" transform="translate(860 290) scale(.33333)">
        <path fill="#244f5c" d="M155 745l215-84v36l-195 75-40-19z"/>
        <path fill="#2b5f6d" d="M370 661l127 109-4 35L368 697z"/>
        <path fill="#2d6272" d="M110 460C95 435 89 415 90 385L103 235L131 255L118 400C118 430 128 445 143 460z"/>
        <path fill="#428f9f" d="M-82 537L107 458L143 460L378 367L570 533L545 620L528 765Q515 780 497 770L370 661L155 745z"/>
        <path fill="#4396a7" d="M-100 548L-82 537L155 745L135 753z"/>
        ${this.lug(0, 0)}
        <path fill="url(#fold1)" d="M118 400L355 307C355 330 362 350 378 367L143 460C128 445 118 430 118 400z"/>
        <path fill="#fdfefe" d="M202 237C200 200 235 160 268 160C270 195 245 235 202 237z"/>
        <path fill="url(#fold2)" stroke="none" d="M557 778L792 687C790 710 785 720 770 726L535 819z"/>
        <path class="line" d="M792 687C790 710 785 720 770 725"/>
        <path fill="#2b5f6d" d="M541 615L569 636L557 778C555 795 550 808 540 815C530 823 510 822 493 805L497 770C505 776 520 776 526 760z"/>
        ${this.lug(438, 381)}
        <path fill="#fdfefe" d="M660 612L645 597C650 565 680 541 706 541C706 575 690 602 660 612z"/>
        <path class="line" d="M640 613l20 0-14-12M497 770l28-12"/>
      </g>

      <g class="edge" transform="translate(700 440) scale(.33333)">
        <path fill="#244f5c" d="M768 430l6 30-171 112-5-30z"/>
        <path fill="#244f5c" d="M598 542C580 550 560 570 552 598L485 815C482 822 475 830 463 835L467 868C495 855 508 840 516 811L585 596C588 585 595 578 603 572z"/>
        <path fill="#4396a7" d="M380 98L212 205L598 542L768 430L632 314L615 303z"/>
        <path fill="url(#bendTop)" d="M212 205C190 215 172 240 167 265L552 598C560 570 580 550 598 542z"/>
        <path fill="#35707b" d="M167 265L97 482L485 815L552 598z"/>
        <path fill="url(#bendLow)" d="M97 482C92 495 88 503 78 502L463 835C475 830 482 822 485 815z"/>
        <path class="line" d="M552 598l33-2M485 815l31-4M615 303l20-8-1 20 14 9M458 842l9 26"/>
      </g>

      <path d="M658 402v15l3.500-3 3 7 2-1-3-6.500h5z" fill="#fff" stroke="#222"/>

      <g>
        <path d="M303 951l2-22" stroke="#3538b8"/><path d="M296 927q0-4 9-11 9 8 9 13-2 4-9 4t-9-6z" fill="#04049c"/>
        <path d="M303 951l22-9" stroke="#1f9a38"/><path d="M321 934l17 4-8 13q-6-2-8-8z" fill="#067d14"/>
        <path d="M303 952l15 13" stroke="#b3392c"/><path d="M329 976h-14q-3-8 3-13 6-5 9 0z" fill="#a82a17"/><path d="M329 976l-11-12-2 5z" fill="#701515"/>
        <text class="axis" x="301" y="916" fill="#3d3fe0">Z</text><text class="axis" x="340" y="942" fill="#27b24c">Y</text><text class="axis" x="329" y="987" fill="#e2402c">X</text>
      </g>

      <g>
        <ellipse cx="1856" cy="258" rx="42" ry="24" fill="url(#shade)"/>
        <path d="M1825 206l39-13 31 22-41 16z" fill="#f3f4f5"/><path d="M1825 206l29 25-2 40-26-26z" fill="#eaebec"/><path d="M1854 231l41-16-7 38-36 18z" fill="#f0f1f2"/>
        <path d="M1825 206l39-13 31 22-41 16zM1825 206l1 39 26 26 36-18 7-38M1854 231l-2 40" fill="none" stroke="#8f8f8f" stroke-dasharray="8 3"/>
        <text class="cube" transform="matrix(.55 .5 -.8 .45 1851 208)">TOP</text>
        <text class="cube" transform="matrix(.5 .45 0 1 1828 234)">FRONT</text>
        <text class="cube" transform="matrix(.72 -.28 -.1 1 1860 253)">RIGHT</text>
      </g>
    </svg>`;
  }
}

@customElement("app-root")
class AppRoot extends LitElement {
  @property() status = "Ready";
  static styles = [reset, css`
    :host { display: flex; flex-direction: column; min-height: 100vh; font: 11px/16px "Noto Sans", "Open Sans", sans-serif; background: #fdfefe; border-bottom: 1px solid #000; box-sizing: border-box; }
    .work { flex: 1; display: grid; grid-template-columns: 224px 1fr; }
    .doc { display: flex; flex-direction: column; min-width: 0; }
    .canvas { position: relative; flex: 1; background: #fdfefe; }
    .scene { position: absolute; inset: 0; }
    .nav { position: absolute; right: 1px; top: 144px; }
    .win { position: absolute; right: 0; top: 4px; display: flex; gap: 5px; }
    .tabs { display: flex; height: 24px; background: #d9d9d9; color: #666; }
    .tab { display: flex; align-items: center; gap: 5px; padding: 2px 6px 0 8px; }
    .on { background: #eee; color: #1592d0; border-bottom: 3px solid #35a8e0; padding-top: 0; }
    .more { margin-left: auto; padding-right: 4px; }
    .status { display: flex; height: 24px; align-items: center; background: #eee; color: #333; padding: 0 9px 0 1px; }
    .msg { flex: 1; }
    .num { width: 38px; border-left: 1px solid #e2e2e2; text-align: center; }
  `];
  render() {
    return html`
      <title-bar></title-bar>
      <ribbon-bar></ribbon-bar>
      <div class="work">
        <model-browser></model-browser>
        <main class="doc">
          <div class="canvas">
            <model-scene class="scene"></model-scene>
            <div class="win"><button aria-label="Minimize document">${icon("minimize")}</button><button aria-label="Tile">${icon("tile")}</button><button aria-label="Close document">${icon("close")}</button></div>
            <nav-bar class="nav"></nav-bar>
          </div>
          <div class="tabs">
            <button class="tab on">Drag Lever Spring Arm_modified.ipt${icon("smallX")}</button>
            <button class="tab">Drag Lever Spring Arm.ipt${icon("smallX")}</button>
            <button class="more" aria-label="Document list">${icon("menu")}</button>
          </div>
        </main>
      </div>
      <footer class="status"><span class="msg">${this.status}</span><span class="num">1</span><span class="num">2</span></footer>`;
  }
}
